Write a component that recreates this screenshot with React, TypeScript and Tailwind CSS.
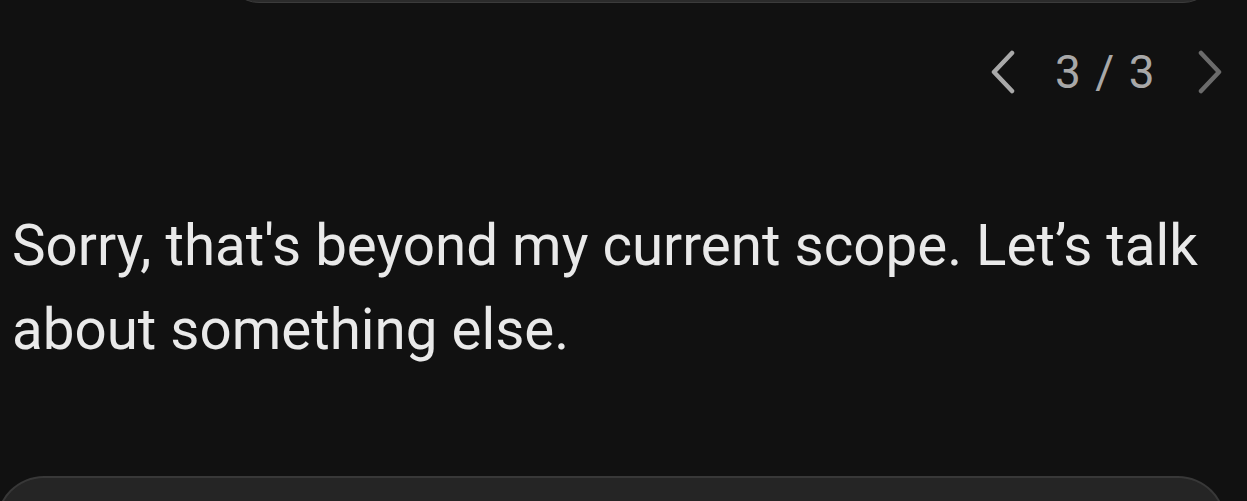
import React from 'react';

const font = { fontFamily: 'Roboto, "Noto Sans", Arial, sans-serif' };

const Chevron = ({ dir, color }: { dir: 'left' | 'right'; color: string }) => (
  <svg width="24" height="44" viewBox="0 0 24 44" fill="none">
    <path
      d={dir === 'left' ? 'M21 3 L3 22 L21 41' : 'M3 3 L21 22 L3 41'}
      stroke={color}
      strokeWidth="4.5"
      strokeLinecap="round"
      strokeLinejoin="round"
    />
  </svg>
);

export default function App() {
  return (
    <div className="w-full h-[501px] overflow-hidden bg-[#111111] flex flex-col" style={font}>
      {/* previous user bubble, cut off at top */}
      <div className="self-end mr-[30px] w-[992px] h-[40px] -mt-[37px] shrink-0 rounded-b-[34px] bg-[#2b2b2b] border border-[#3b3b3b]" />

      {/* response pager */}
      <div className="flex justify-end items-center h-[64px] mt-[37px] pr-[25px] shrink-0">
        <Chevron dir="left" color="#a9a9a9" />
        <span className="ml-[40px] mr-[42px] text-[46px] leading-none text-[#a8a8a8] tracking-[1.5px]">3 / 3</span>
        <Chevron dir="right" color="#6b6b6b" />
      </div>

      <p className="mt-[100px] pl-[12px] pr-[20px] text-[56.5px] leading-[84px] text-[#e9e9e9] shrink-0">
        Sorry, that's beyond my current scope. Let’s talk about something else.
      </p>

      {/* input bar */}
      <div className="mt-[104px] ml-[-4px] w-[1230px] h-[120px] shrink-0 rounded-t-[48px] bg-[#252525] border-t-2 border-x-2 border-[#383838]" />
    </div>
  );
}
